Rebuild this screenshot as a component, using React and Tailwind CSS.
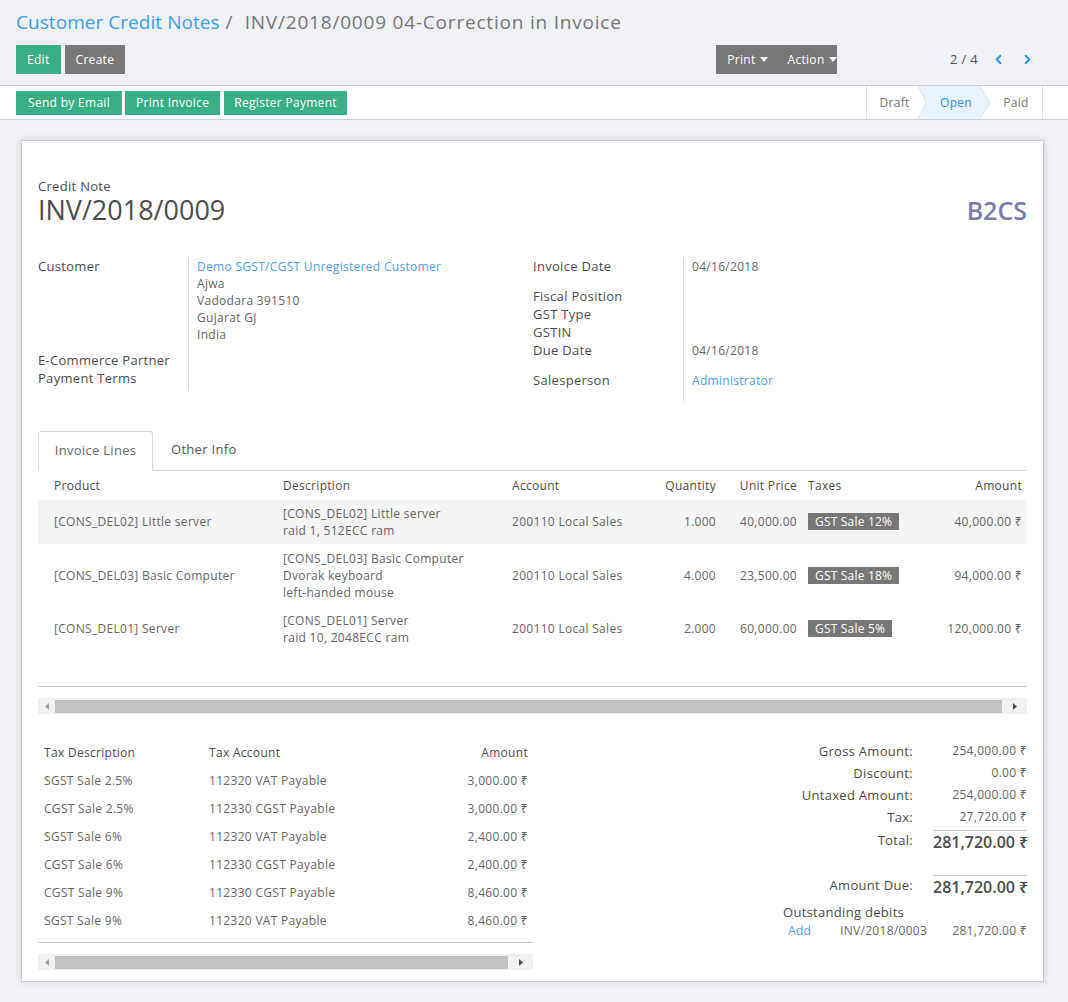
import { ChevronLeft, ChevronRight } from "lucide-react";

const lines = [
  {
    product: "[CONS_DEL02] Little server",
    desc: ["[CONS_DEL02] Little server", "raid 1, 512ECC ram"],
    qty: "1.000",
    price: "40,000.00",
    tax: "GST Sale 12%",
    amount: "40,000.00 ₹",
    striped: true,
    h: "h-[44px]",
  },
  {
    product: "[CONS_DEL03] Basic Computer",
    desc: ["[CONS_DEL03] Basic Computer", "Dvorak keyboard", "left-handed mouse"],
    qty: "4.000",
    price: "23,500.00",
    tax: "GST Sale 18%",
    amount: "94,000.00 ₹",
    h: "h-[63px]",
  },
  {
    product: "[CONS_DEL01] Server",
    desc: ["[CONS_DEL01] Server", "raid 10, 2048ECC ram"],
    qty: "2.000",
    price: "60,000.00",
    tax: "GST Sale 5%",
    amount: "120,000.00 ₹",
    h: "h-[43px]",
  },
];

const taxes = [
  ["SGST Sale 2.5%", "112320 VAT Payable", "3,000.00 ₹"],
  ["CGST Sale 2.5%", "112330 CGST Payable", "3,000.00 ₹"],
  ["SGST Sale 6%", "112320 VAT Payable", "2,400.00 ₹"],
  ["CGST Sale 6%", "112330 CGST Payable", "2,400.00 ₹"],
  ["CGST Sale 9%", "112330 CGST Payable", "8,460.00 ₹"],
  ["SGST Sale 9%", "112320 VAT Payable", "8,460.00 ₹"],
];

const Caret = () => (
  <svg width="8" height="5" viewBox="0 0 8 5" className="ml-[4px] inline-block">
    <path d="M0 0h8L4 5z" fill="#fff" />
  </svg>
);

const Scrollbar = () => (
  <div className="flex h-[16px] items-center bg-[#f1f1f1]">
    <div className="flex w-[17px] items-center justify-center">
      <svg width="4" height="7" viewBox="0 0 4 7">
        <path d="M4 0v7L0 3.5z" fill="#a3a3a3" />
      </svg>
    </div>
    <div className="h-[13px] flex-1 bg-[#c1c1c1]" />
    <div className="flex w-[25px] items-center justify-center">
      <svg width="4" height="7" viewBox="0 0 4 7">
        <path d="M0 0v7l4-3.5z" fill="#505050" />
      </svg>
    </div>
  </div>
);

const App = () => {
  return (
    <div className="min-h-[1002px] bg-[#f0f1f5] font-['Open_Sans','Noto_Sans',sans-serif] tracking-[0.3px] text-[#666]">
      {/* control panel */}
      <div className="px-[16px] pt-[9px]">
        <div className="text-[19px] leading-[26px]">
          <span className="tracking-[0.05px] text-[#3aa0f0]">Customer Credit Notes</span>
          <span className="tracking-[0.8px] text-[#777]"> /{"\u00a0 "}INV/2018/0009 04-Correction in Invoice</span>
        </div>
        <div className="mt-[10px] flex h-[29px] items-center">
          <button className="h-[29px] bg-[#3aaf85] px-[11px] text-[12px] font-medium text-white">Edit</button>
          <button className="ml-[4px] h-[29px] bg-[#787878] px-[11px] text-[12px] font-medium text-white">Create</button>
          <div className="ml-[591px] flex h-[29px] items-center bg-[#787878] pl-[11px] text-[12px] font-medium text-white">
            <span className="flex items-center">Print<Caret /></span>
            <span className="ml-[20px] flex items-center">Action<Caret /></span>
          </div>
          <div className="ml-auto flex items-center pr-[17px] text-[13px] text-[#555]">
            <span>2 / 4</span>
            <ChevronLeft size={15} strokeWidth={3} className="ml-[13px] text-[#2c93ef]" />
            <ChevronRight size={15} strokeWidth={3} className="ml-[14px] text-[#2c93ef]" />
          </div>
        </div>
      </div>

      {/* status bar */}
      <div className="mt-[11px] flex h-[35px] items-center border-y border-[#cfd1d6] bg-white pl-[16px]">
        <div className="flex gap-[3px]">
          <button className="h-[24px] bg-[#3aaf85] px-[12px] text-[12px] font-medium text-white">Send by Email</button>
          <button className="h-[24px] bg-[#3aaf85] px-[11px] text-[12px] font-medium text-white">Print Invoice</button>
          <button className="ml-[1px] h-[24px] bg-[#3aaf85] px-[10px] text-[12px] font-medium text-white">Register Payment</button>
        </div>
        <div className="ml-auto mr-[25px] flex h-full border-x border-[#e2e3e6] text-[12px] font-medium">
          <div className="flex w-[51px] items-center justify-center pl-[4px] text-[#777]">Draft</div>
          <div className="relative flex w-[72px] items-center justify-center text-[#2c93ef]">
            <svg className="absolute inset-0" width="72" height="33" viewBox="0 0 72 33">
              <path d="M0 0H62L72 16.5L62 33H0L8 16.5Z" fill="#e6f3fd" />
              <path d="M0 0L8 16.5L0 33M62 0L72 16.5L62 33" fill="none" stroke="#dfe3e8" />
            </svg>
            <span className="relative ml-[4px]">Open</span>
          </div>
          <div className="flex w-[52px] items-center justify-center text-[#777]">Paid</div>
        </div>
      </div>

      {/* sheet */}
      <div className="pl-[21px] pr-[24px] pt-[20px]">
        <div className="border border-[#c9cad3] bg-white px-[16px] pb-[11px] pt-[38px] shadow-[0_0_8px_rgba(0,0,0,0.12)]">
          <div className="flex items-end justify-between">
            <div>
              <div className="text-[13px] font-medium leading-[14px] text-[#4c4c4c]">Credit Note</div>
              <div className="mt-[1px] text-[27px] leading-[32px] tracking-normal text-[#4c4c4c]">INV/2018/0009</div>
            </div>
            <div className="pb-[1px] text-[25px] font-semibold leading-[30px] tracking-normal text-[#7c7bad]">B2CS</div>
          </div>

          {/* fields */}
          <div className="mt-[31px] flex items-start text-[12px]">
            <div className="grid w-[495px] grid-cols-[150px_1fr] content-start leading-[17px]">
              <div className="h-[94px] text-[13px] font-medium leading-[18px] text-[#4c4c4c]">Customer</div>
              <div className="border-l border-[#d9d9d9] pl-[8px] pt-[1px]">
                <div className="text-[#4a9ff5]">Demo SGST/CGST Unregistered Customer</div>
                <div>Ajwa</div>
                <div>Vadodara 391510</div>
                <div>Gujarat GJ</div>
                <div>India</div>
              </div>
              <div className="h-[18px] text-[13px] font-medium leading-[18px] text-[#4c4c4c]">E-Commerce Partner</div>
              <div className="border-l border-[#d9d9d9]" />
              <div className="h-[22px] text-[13px] font-medium leading-[18px] text-[#4c4c4c]">Payment Terms</div>
              <div className="border-l border-[#d9d9d9]" />
            </div>
            <div className="grid flex-1 grid-cols-[150px_1fr] content-start leading-[18px]">
              <div className="h-[30px] text-[13px] font-medium text-[#4c4c4c]">Invoice Date</div>
              <div className="border-l border-[#d9d9d9] pl-[8px] pt-[1px]">04/16/2018</div>
              <div className="h-[18px] text-[13px] font-medium text-[#4c4c4c]">Fiscal Position</div>
              <div className="border-l border-[#d9d9d9]" />
              <div className="h-[18px] text-[13px] font-medium text-[#4c4c4c]">GST Type</div>
              <div className="border-l border-[#d9d9d9]" />
              <div className="h-[18px] text-[13px] font-medium text-[#4c4c4c]">GSTIN</div>
              <div className="border-l border-[#d9d9d9]" />
              <div className="h-[30px] text-[13px] font-medium text-[#4c4c4c]">Due Date</div>
              <div className="border-l border-[#d9d9d9] pl-[8px] pt-[1px]">04/16/2018</div>
              <div className="h-[30px] text-[13px] font-medium text-[#4c4c4c]">Salesperson</div>
              <div className="border-l border-[#d9d9d9] pl-[8px] pt-[1px] text-[#4a9ff5]">Administrator</div>
            </div>
          </div>

          {/* tabs */}
          <div className="mt-[30px] flex h-[40px] items-end border-b border-[#d9d9d9] text-[13px]">
            <div className="-mb-px flex h-[40px] w-[115px] items-center justify-center rounded-t-[3px] border border-b-white border-[#d9d9d9] bg-white text-[#666]">
              Invoice Lines
            </div>
            <div className="flex h-[40px] items-center pl-[18px] text-[#555]">Other Info</div>
          </div>

          {/* invoice lines */}
          <div className="grid h-[29px] grid-cols-[237px_229px_136px_84px_78px_98px_1fr] items-center text-[12px] font-medium text-[#4c4c4c]">
            <div className="pl-[16px]">Product</div>
            <div className="pl-[8px]">Description</div>
            <div className="pl-[8px]">Account</div>
            <div className="pr-[8px] text-right">Quantity</div>
            <div className="pr-[5px] text-right">Unit Price</div>
            <div className="pl-[6px]">Taxes</div>
            <div className="pr-[5px] text-right">Amount</div>
          </div>
          {lines.map((l) => (
            <div
              key={l.product}
              className={`grid grid-cols-[237px_229px_136px_84px_78px_98px_1fr] items-center text-[12px] ${l.h} ${l.striped ? "bg-[#f4f4f4]" : ""}`}
            >
              <div className="pl-[16px]">{l.product}</div>
              <div className="pl-[8px] leading-[17px]">
                {l.desc.map((d) => (
                  <div key={d}>{d}</div>
                ))}
              </div>
              <div className="pl-[8px]">200110 Local Sales</div>
              <div className="pr-[8px] text-right">{l.qty}</div>
              <div className="pr-[5px] text-right">{l.price}</div>
              <div className="pl-[6px]">
                <span className="inline-block whitespace-nowrap bg-[#777] px-[7px] text-[12px] font-medium leading-[17px] tracking-[0.2px] text-white">
                  {l.tax}
                </span>
              </div>
              <div className="pr-[5px] text-right">{l.amount}</div>
            </div>
          ))}
          <div className="h-[37px] border-b border-[#cccccc]" />
          <div className="mt-[11px]">
            <Scrollbar />
          </div>

          {/* bottom: tax table + totals */}
          <div className="mt-[25px] flex items-start justify-between text-[12px]">
            <div className="w-[495px]">
              <div className="grid h-[28px] grid-cols-[171px_1fr_120px] items-center font-medium text-[#4c4c4c]">
                <div className="pl-[6px]">Tax Description</div>
                <div>Tax Account</div>
                <div className="pr-[5px] text-right">Amount</div>
              </div>
              {taxes.map((t, i) => (
                <div key={i} className="grid h-[28px] grid-cols-[171px_1fr_120px] items-center">
                  <div className="pl-[6px]">{t[0]}</div>
                  <div>{t[1]}</div>
                  <div className="pr-[5px] text-right">{t[2]}</div>
                </div>
              ))}
              <div className="h-[8px] border-b border-[#cccccc]" />
              <div className="mt-[11px]">
                <Scrollbar />
              </div>
            </div>

            <div className="w-[244px] pt-[1px]">
              <div className="grid grid-cols-[1fr_94px] gap-x-[20px]">
                {[
                  ["Gross Amount:", "254,000.00 ₹"],
                  ["Discount:", "0.00 ₹"],
                  ["Untaxed Amount:", "254,000.00 ₹"],
                  ["Tax:", "27,720.00 ₹"],
                ].map(([k, v]) => (
                  <div key={k} className="contents">
                    <div className="h-[22px] whitespace-nowrap text-right text-[13px] font-medium leading-[22px] text-[#4c4c4c]">{k}</div>
                    <div className="h-[22px] text-right leading-[22px]">{v}</div>
                  </div>
                ))}
                <div className="pt-[3px] text-right text-[13px] font-medium leading-[18px] text-[#4c4c4c]">Total:</div>
                <div className="mt-[2px] whitespace-nowrap border-t border-[#cccccc] pt-[1px] text-right text-[16px] font-semibold leading-[20px] tracking-normal text-[#4c4c4c]">
                  281,720.00 ₹
                </div>
                <div className="mt-[23px] whitespace-nowrap pt-[1px] text-right text-[13px] font-medium leading-[18px] text-[#4c4c4c]">Amount Due:</div>
                <div className="mt-[23px] whitespace-nowrap border-t border-[#cccccc] pt-[1px] text-right text-[16px] font-semibold leading-[20px] tracking-normal text-[#4c4c4c]">
                  281,720.00 ₹
                </div>
              </div>
              <div className="mt-[6px] text-[13px] font-medium leading-[18px] text-[#4c4c4c]">Outstanding debits</div>
              <div className="mt-[1px] flex items-center leading-[17px]">
                <span className="ml-[5px] w-[52px] text-[#4a9ff5]">Add</span>
                <span>INV/2018/0003</span>
                <span className="ml-auto">281,720.00 ₹</span>
              </div>
            </div>
          </div>
        </div>
      </div>
    </div>
  );
};

export default App;
